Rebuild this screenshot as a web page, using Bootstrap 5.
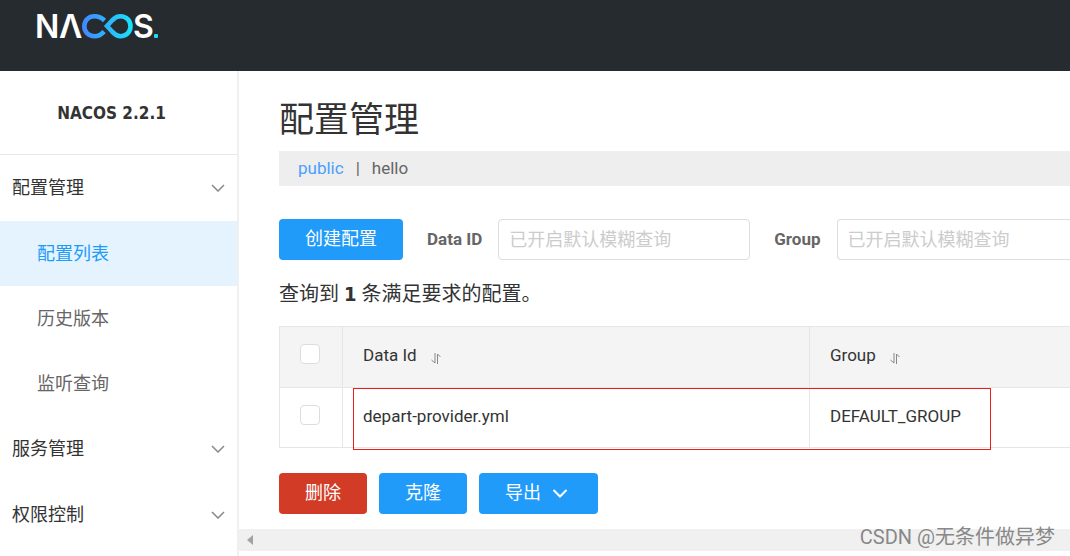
<!DOCTYPE html>
<html lang="zh-CN">
<head>
<meta charset="utf-8">
<meta name="viewport" content="width=device-width, initial-scale=1">
<title>Nacos</title>
<link rel="stylesheet" href="https://cdn.jsdelivr.net/npm/bootstrap@5.3.0/dist/css/bootstrap.min.css">
<style>
  body { font-family: Roboto, "Noto Sans CJK SC", sans-serif; font-size: 18px; line-height: 24px; color: #333; background: #fff; }
  .topbar { background: #262b30; height: 71px; }
  .side { width: 239px; border-right: 2px solid #f0f0f0; }
  .version { height: 84px; border-bottom: 1px solid #e8e8e8; font: 700 17px/24px "DejaVu Sans Condensed", "Noto Sans", sans-serif; padding-right: 14px; }
  .group-link { height: 66px; padding: 0 12px; color: #333; }
  .sub-link { height: 65px; padding: 0 12px 0 37px; color: #666; }
  .sub-link.active { background: #e4f3fe; color: #209bfa; }
  .content { padding: 26px 0 15px 40px; }
  .page-title { font-size: 35px; line-height: 48px; font-weight: 400; margin-bottom: 6px; }
  .spaces { background: #eee; height: 35px; padding: 0 0 2px 19px; font-size: 17px; color: #666; }
  .spaces a { color: #666; }
  .spaces a.current { color: #4a9fff; }
  .tool { height: 41px; padding: 0 26px 2px; border-radius: 4px; border: 0; font-size: 18px; line-height: 24px; color: #fff; --bs-btn-color: #fff; --bs-btn-hover-color: #fff; }
  .tool-blue, .tool-blue:hover { background: #209bfa; }
  .tool-red, .tool-red:hover { background: #d23c26; }
  .tool svg { margin: 0 4px 0 11px; }
  .filter { margin-top: 33px; }
  .filter label { font-size: 17px; font-weight: 700; color: #666; padding-bottom: 2px; }
  .field { height: 41px; border: 1px solid #ddd; border-radius: 4px; font-size: 18px; padding: 0 10px; }
  .field::placeholder { color: #ccc; }
  .field-id { width: 252px; }
  .result { font-size: 20px; line-height: 30px; margin: 19px 0 17px; }
  .result b { font-family: "DejaVu Sans Condensed", "Noto Sans", sans-serif; }
  .configs { border: 1px solid #e6e6e6; border-right: 0; table-layout: fixed; font-size: 17px; }
  .configs th, .configs td { height: 60px; padding: 0 20px 4px; font-weight: 400; color: #333; border: 1px solid #e6e6e6; border-right: 0; vertical-align: middle; }
  .configs th { height: 61px; background: #f4f4f4; }
  .configs th svg { margin-left: 10px; vertical-align: -3px; }
  .configs .pick { padding-bottom: 6px; }
  .col-check { width: 63px; }
  .col-id { width: 467px; }
  .configs .form-check-input { width: 20px; height: 20px; margin: 0; border: 1px solid #ddd; border-radius: 4px; display: block; }
  .highlight { left: 74px; right: 79px; bottom: -2px; height: 62px; border: 1px solid #f01c1c; pointer-events: none; }
  .actions { padding-top: 25px; }
  .hscroll { height: 22px; background: #f0f0f0; padding-left: 8px; }
  .watermark { right: 15px; bottom: 4px; font-size: 20px; line-height: 30px; color: #888; }
</style>
</head>
<body class="d-flex flex-column min-vh-100 position-relative overflow-x-hidden">
<header class="navbar topbar p-0 align-items-start">
  <a class="navbar-brand p-0 m-0" href="#" aria-label="Nacos">
    <svg class="d-block" width="170" height="52" viewBox="0 0 170 52" aria-hidden="true">
      <defs><linearGradient id="loop" x1="82" y1="0" x2="133" y2="0" gradientUnits="userSpaceOnUse"><stop offset="0" stop-color="#4485ff"/><stop offset="1" stop-color="#18e4fa"/></linearGradient></defs>
      <g fill="#fff" font-family="Inter" font-weight="600" font-size="32"><text x="35" y="38">N</text><text x="59" y="38">Λ</text><text x="133" y="38">S</text></g>
      <path d="M104.500 20.500C101.500 17.500 98 16.300 94.500 16.300C88.500 16.300 84.300 20.500 84.300 26.300C84.300 32 88.500 36.200 94.500 36.200C98 36.200 101.500 34.500 104 31.500M107 26L112.500 20C115 17.500 117.500 16.300 120.500 16.300C126.300 16.300 130.500 20.500 130.500 26.300C130.500 32 126.300 36.200 120.500 36.200C117.500 36.200 115 34.500 112.500 32Z" fill="none" stroke="url(#loop)" stroke-width="4.600"/>
      <rect x="154" y="34" width="4" height="4" rx="1" fill="#18dff5"/>
    </svg>
  </a>
</header>
<div class="d-flex flex-grow-1">
  <aside class="side flex-shrink-0">
    <div class="version d-flex align-items-center justify-content-center">NACOS 2.2.1</div>
    <nav class="nav flex-column">
      <a class="group-link d-flex align-items-center justify-content-between text-decoration-none" href="#">配置管理<svg width="14" height="8" viewBox="0 0 14 8" fill="none" stroke="#888" stroke-width="1.500"><path d="M1 1l6 6 6-6"/></svg></a>
      <a class="sub-link active d-flex align-items-center text-decoration-none" href="#">配置列表</a>
      <a class="sub-link d-flex align-items-center text-decoration-none" href="#">历史版本</a>
      <a class="sub-link d-flex align-items-center text-decoration-none" href="#">监听查询</a>
      <a class="group-link d-flex align-items-center justify-content-between text-decoration-none" href="#">服务管理<svg width="14" height="8" viewBox="0 0 14 8" fill="none" stroke="#888" stroke-width="1.500"><path d="M1 1l6 6 6-6"/></svg></a>
      <a class="group-link d-flex align-items-center justify-content-between text-decoration-none" href="#">权限控制<svg width="14" height="8" viewBox="0 0 14 8" fill="none" stroke="#888" stroke-width="1.500"><path d="M1 1l6 6 6-6"/></svg></a>
    </nav>
  </aside>
  <main class="flex-grow-1 overflow-hidden">
    <div class="content">
      <h1 class="page-title">配置管理</h1>
      <div class="spaces d-flex align-items-center">
        <a class="current text-decoration-none" href="#">public</a><span class="px-2 mx-1">|</span><a class="text-decoration-none" href="#">hello</a>
      </div>
      <form class="filter d-flex align-items-center">
        <button type="button" class="btn tool tool-blue flex-shrink-0 me-4">创建配置</button>
        <label class="me-3 flex-shrink-0" for="dataId">Data ID</label>
        <input class="form-control field field-id flex-shrink-0 me-4" id="dataId" type="text" placeholder="已开启默认模糊查询">
        <label class="me-3 flex-shrink-0" for="groupName">Group</label>
        <input class="form-control field border-end-0 rounded-end-0" id="groupName" type="text" placeholder="已开启默认模糊查询">
      </form>
      <p class="result">查询到 <b>1</b> 条满足要求的配置。</p>
      <div class="position-relative">
        <table class="configs w-100">
          <colgroup><col class="col-check"><col class="col-id"><col></colgroup>
          <thead>
            <tr>
              <th class="pick" scope="col"><input class="form-check-input" type="checkbox" aria-label="全选"></th>
              <th scope="col">Data Id <svg width="10" height="11" viewBox="0 0 10 11" fill="none" stroke="#888"><path d="M4 0v10L0.500 7M6.500 11V1L9.500 4"/></svg></th>
              <th scope="col">Group <svg width="10" height="11" viewBox="0 0 10 11" fill="none" stroke="#888"><path d="M4 0v10L0.500 7M6.500 11V1L9.500 4"/></svg></th>
            </tr>
          </thead>
          <tbody>
            <tr>
              <td class="pick"><input class="form-check-input" type="checkbox" aria-label="depart-provider.yml"></td>
              <td>depart-provider.yml</td>
              <td>DEFAULT_GROUP</td>
            </tr>
          </tbody>
        </table>
        <div class="highlight position-absolute"></div>
      </div>
      <div class="actions d-flex gap-2">
        <button type="button" class="btn tool tool-red me-1">删除</button>
        <button type="button" class="btn tool tool-blue me-1">克隆</button>
        <button type="button" class="btn tool tool-blue">导出<svg width="16" height="9" viewBox="0 0 16 9" fill="none" stroke="#fff" stroke-width="2"><path d="M1.500 1l6.500 6.500L14.500 1"/></svg></button>
      </div>
    </div>
    <div class="hscroll d-flex align-items-center"><svg width="6" height="10" viewBox="0 0 6 10"><path d="M6 0v10L0 5z" fill="#a3a3a3"/></svg></div>
  </main>
</div>
<div class="watermark position-absolute">CSDN @无条件做异梦</div>
<script src="https://cdn.jsdelivr.net/npm/bootstrap@5.3.0/dist/js/bootstrap.bundle.min.js"></script>
</body>
</html>
